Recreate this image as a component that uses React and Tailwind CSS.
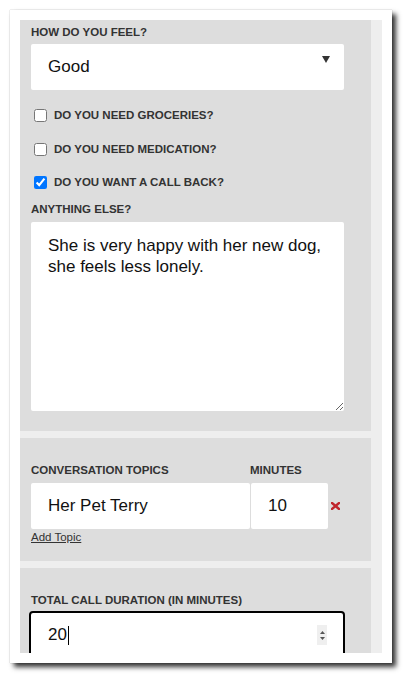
import React from "react";

// Check-in form, shown inside a framed card with a drop shadow

const font = { fontFamily: '"Liberation Sans", Arial, sans-serif' };

function Label({ children, className = "" }) {
  return (
    <div className={"text-[11.5px] leading-[13px] font-bold text-[#333] uppercase " + className}>
      {children}
    </div>
  );
}

function CheckRow({ label, checked }) {
  return (
    <div className="h-[33.5px] flex items-center">
      <input
        type="checkbox"
        defaultChecked={checked}
        className="m-0 ml-[3px] w-[13px] h-[13px]"
      />
      <span className="ml-[7px] text-[11.5px] leading-[13px] font-bold text-[#333]">{label}</span>
    </div>
  );
}

export default function App() {
  return (
    <div className="w-[403px] h-[674px] bg-white p-[10px]" style={font}>
      {/* card */}
      <div className="w-[382px] h-[653px] bg-white p-[10px] shadow-[0_0_1px_rgba(0,0,0,0.35),4px_4px_5px_rgba(0,0,0,0.8)]">
        <div className="h-full bg-[#eeeeee] overflow-hidden flex flex-col gap-[7px]">

          {/* ---------- How do you feel ---------- */}
          <div className="w-[351px] bg-[#dddddd] pt-[6px] pl-[11px] pb-[20px]">
            <Label>How do you feel?</Label>
            <div className="mt-[5px] w-[313px] h-[46px] bg-white rounded-[2px] flex items-start justify-between pl-[17px] pr-[14px] pt-[12px]">
              <span className="mt-[1px] text-[17px] leading-[20px] text-[#111]">Good</span>
              <svg width="8" height="7" viewBox="0 0 8 7">
                <polygon points="0,0 8,0 4,7" fill="#333" />
              </svg>
            </div>

            <div className="mt-[9px]">
              <CheckRow label="DO YOU NEED GROCERIES?" />
              <CheckRow label="DO YOU NEED MEDICATION?" />
              <CheckRow label="DO YOU WANT A CALL BACK?" checked />
            </div>

            <Label className="mt-[3.5px]">Anything else?</Label>
            <textarea
              readOnly
              defaultValue="She is very happy with her new dog, she feels less lonely."
              className="block mt-[6px] w-[313px] h-[189px] bg-white rounded-[2px] border-0 outline-none pt-[13px] pl-[17px] pr-[10px] text-[17px] leading-[21px] text-[#111]"
            />
          </div>

          {/* ---------- Conversation topics ---------- */}
          <div className="w-[351px] bg-[#dddddd] pt-[26px] pl-[11px] pb-[17px]">
            <div className="flex">
              <Label className="w-[219px]">Conversation topics</Label>
              <Label>Minutes</Label>
            </div>
            <div className="mt-[6px] flex items-center">
              <div className="w-[219px] h-[46px] bg-white rounded-[2px] pl-[17px] pt-[13px] text-[17px] leading-[20px] text-[#111]">
                Her Pet Terry
              </div>
              <div className="ml-[1px] w-[77px] h-[46px] bg-white rounded-[2px] pl-[17px] pt-[13px] text-[17px] leading-[20px] text-[#111]">
                10
              </div>
              <svg width="9" height="8" viewBox="0 0 9 8" className="ml-[3px]">
                <path d="M1 1 L8 7 M8 1 L1 7" stroke="#c0262d" strokeWidth="2.4" strokeLinecap="square" />
              </svg>
            </div>
            <a href="#" className="block mt-[2px] w-fit text-[11.5px] leading-[13px] text-[#333] underline">
              Add Topic
            </a>
          </div>

          {/* ---------- Total call duration ---------- */}
          <div className="w-[351px] flex-1 bg-[#dddddd] pt-[26px] pl-[11px]">
            <Label>Total call duration (in minutes)</Label>
            <div className="mt-[4px] -ml-[2px] w-[316px] h-[50px] bg-white border-2 border-black rounded-[4px] flex items-start justify-between pl-[17px] pr-[16px] pt-[12px]">
              <div className="flex items-center">
                <span className="text-[17px] leading-[20px] text-[#111]">20</span>
                <span className="ml-[1px] w-[1px] h-[19px] bg-black" />
              </div>
              <div className="w-[10px] h-[20px] bg-[#efefef] flex flex-col items-center justify-center gap-[3px]">
                <svg width="5" height="3" viewBox="0 0 5 3"><polygon points="0,3 5,3 2.5,0" fill="#555" /></svg>
                <svg width="5" height="3" viewBox="0 0 5 3"><polygon points="0,0 5,0 2.5,3" fill="#555" /></svg>
              </div>
            </div>
          </div>

        </div>
      </div>
    </div>
  );
}
